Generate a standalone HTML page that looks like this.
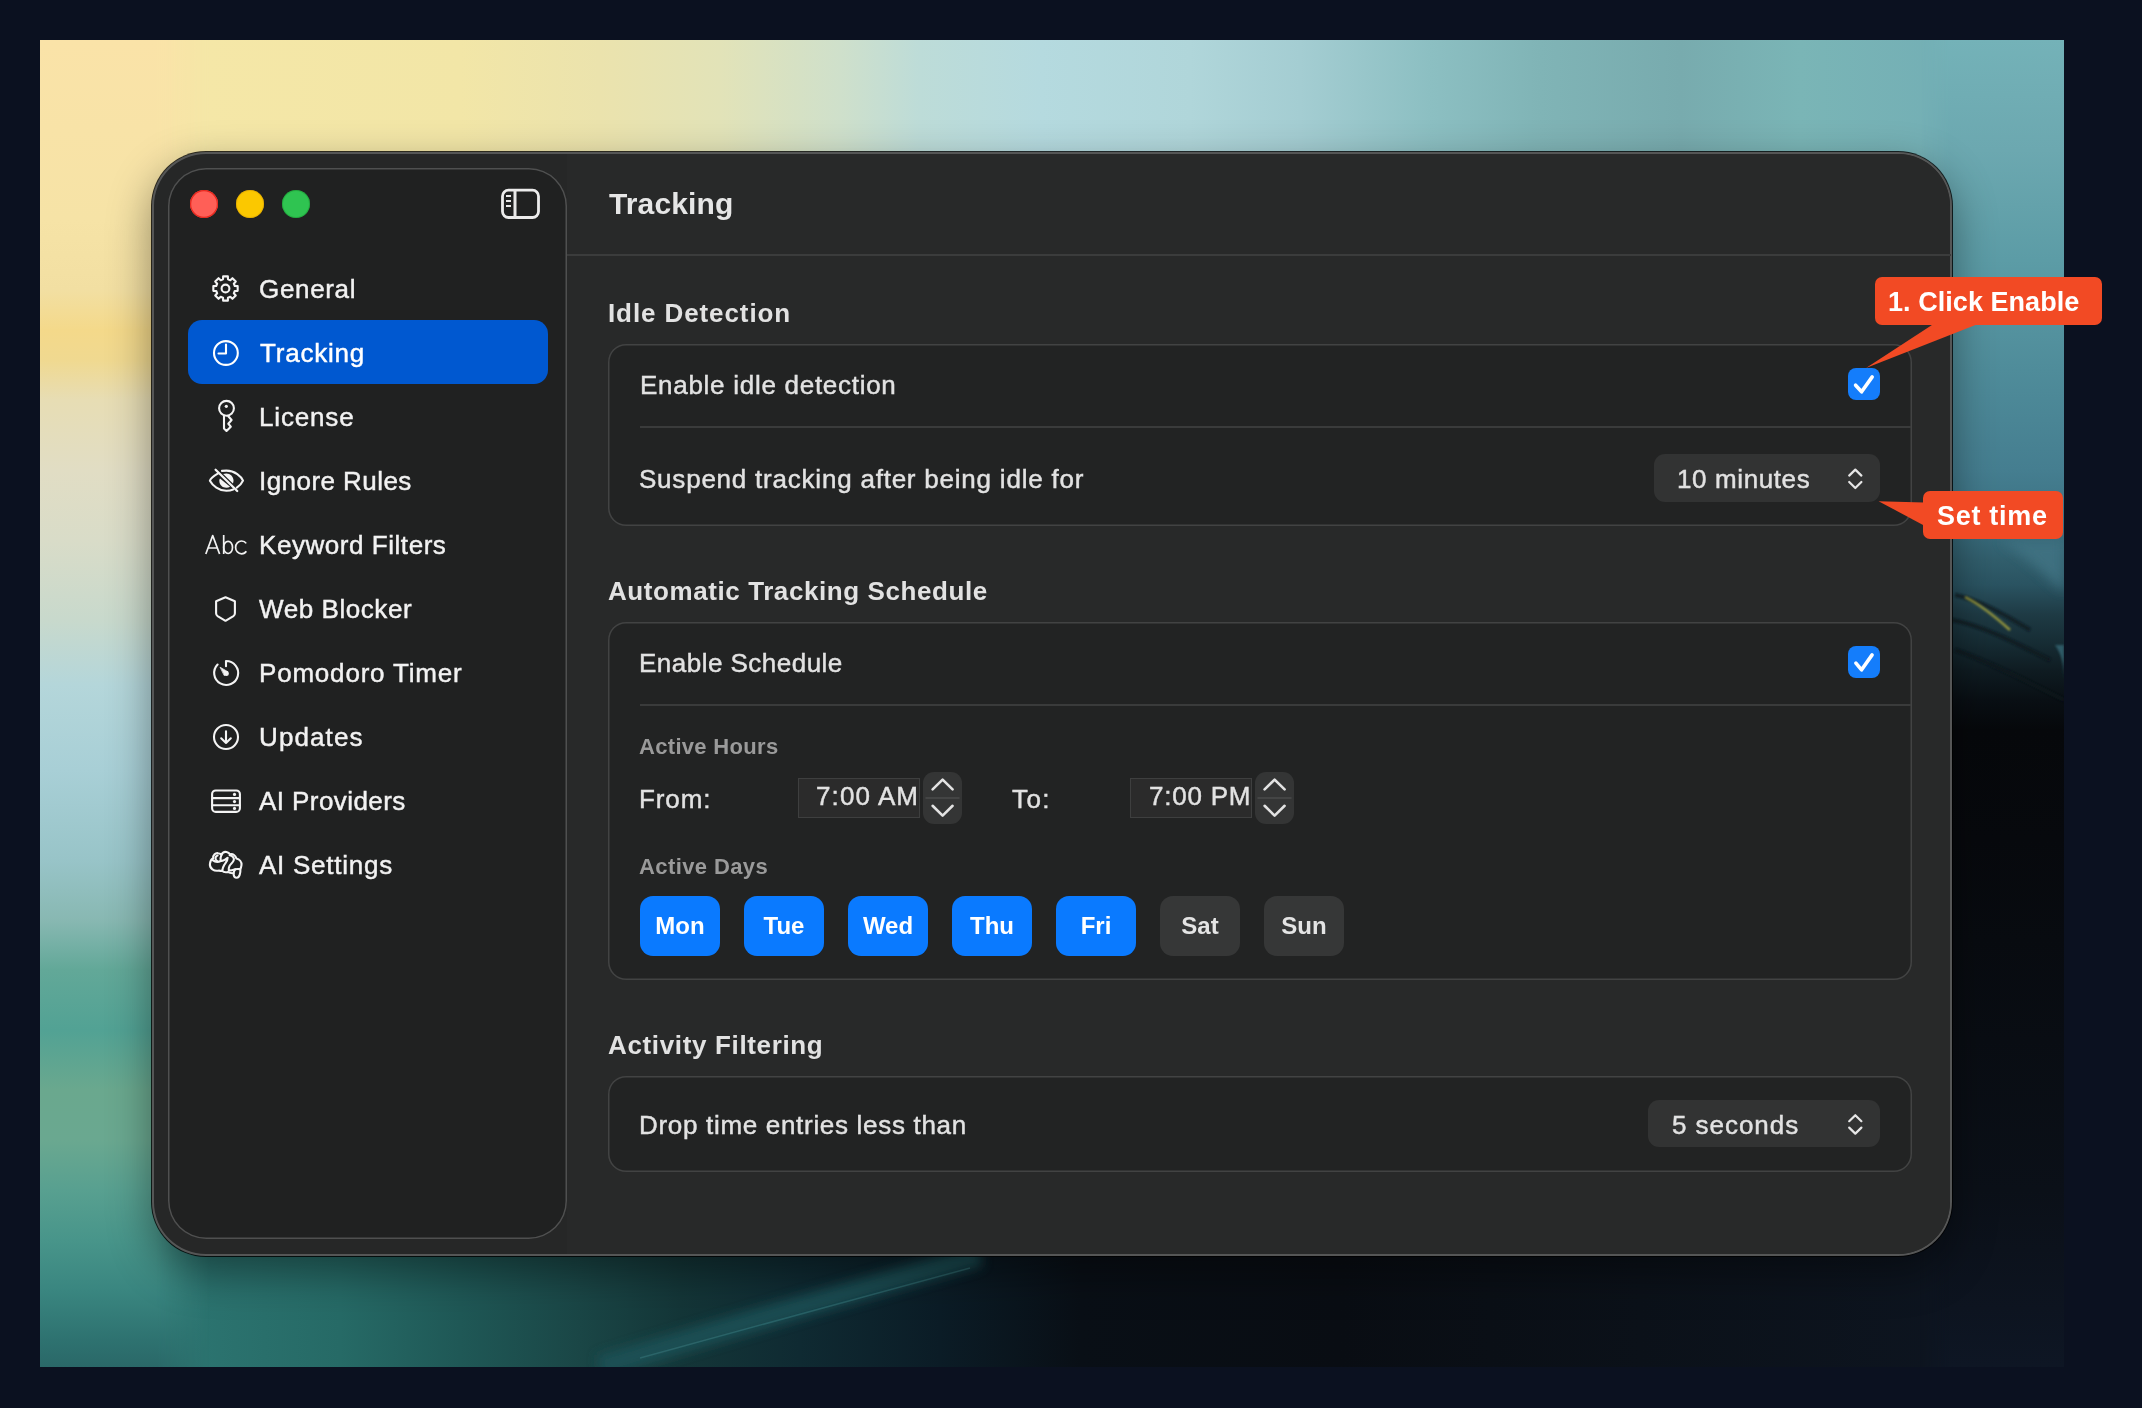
<!DOCTYPE html>
<html>
<head>
<meta charset="utf-8">
<style>
*{margin:0;padding:0;box-sizing:border-box}
html,body{width:2142px;height:1408px;overflow:hidden;background:#0b1120;font-family:"Liberation Sans",sans-serif}
.abs{position:absolute}
#wall{position:absolute;left:40px;top:40px;width:2024px;height:1327px;overflow:hidden;background:#0c141d}
#wall .s{position:absolute}
#wt{left:0;top:0;width:2024px;height:260px;background:linear-gradient(90deg,#fae3a8 0px,#f5e7a7 160px,#f2e6a7 420px,#ebe3ad 560px,#e2e3b8 680px,#cfe0cb 800px,#bddcd8 880px,#b5dadf 1000px,#b0d6da 1150px,#a4cdd2 1260px,#8cbfc2 1390px,#80b4b6 1500px,#78abae 1640px,#7ab5b6 1760px,#6eaab4 2024px)}
#wl{-webkit-mask-image:linear-gradient(90deg,#000 0,#000 116px,transparent 170px);mask-image:linear-gradient(90deg,#000 0,#000 116px,transparent 170px);left:0;top:0;width:170px;height:1327px;background:linear-gradient(180deg,#fae3a8 0px,#f6e3a6 180px,#f2dfa2 250px,#f4d98a 290px,#f0d990 320px,#e7ddb4 360px,#e1ddc4 430px,#d9dcc8 500px,#c8d9cc 580px,#b4d6da 645px,#a8cfd6 730px,#98c4c8 820px,#88b8b2 880px,#62a898 930px,#52a294 990px,#6aa88e 1050px,#6aa890 1100px,#58a090 1150px,#48958a 1200px,#3a8680 1250px,#2e7270 1300px,#2a6868 1327px)}
#wr{-webkit-mask-image:linear-gradient(90deg,transparent 0,#000 30px);mask-image:linear-gradient(90deg,transparent 0,#000 30px);left:1880px;top:0;width:144px;height:1327px;background:linear-gradient(180deg,#74b2b8 0px,#6ca8b0 110px,#5c9ca6 220px,#4f8c9a 330px,#457e90 430px,#3c7283 480px,#315e6c 520px,#2a5361 545px,#1e3a44 575px,#172e36 600px,#0f1c22 630px,#090f14 660px,#06080b 690px,#07090d 800px,#090d13 1000px,#0b1018 1150px,#0e1624 1327px)}
#wb{left:0;top:1180px;width:2024px;height:147px;background:linear-gradient(90deg,#32807a 0px,#2c7470 150px,#266a66 300px,#1f5856 420px,#1a4646 540px,#143638 640px,#0f2a32 760px,#0b1c26 900px,#090f16 1040px,#090d13 1300px,#0b1119 1600px,#0e1622 2024px)}

#win{position:absolute;left:152px;top:152px;width:1800px;height:1104px;border-radius:54px;background:#262727;
 box-shadow:0 0 0 1px rgba(0,0,0,0.8), inset 0 0 0 2px rgba(255,255,255,0.22), 0 16px 44px rgba(0,0,0,0.42);}
#side{position:absolute;left:168px;top:168px;width:399px;height:1071px;border-radius:38px;background:#202121;
 box-shadow: inset 0 0 0 1.5px rgba(255,255,255,0.21);}
.tl{position:absolute;width:28px;height:28px;border-radius:50%;top:190px}
.txt{position:absolute;line-height:1;white-space:nowrap;will-change:transform}
.row,.side-t{-webkit-text-stroke:0.45px currentColor}
.side-t{font-size:26px;color:#f2f2f2}
.hdr{font-size:26px;font-weight:700;color:#e2e2e2}
.row{font-size:26px;color:#e2e2e2}
.card{position:absolute;left:608px;width:1304px;border-radius:18px;background:#222323;box-shadow: inset 0 0 0 1.5px rgba(255,255,255,0.15)}
.sep{position:absolute;left:640px;width:1271px;height:2px;background:#3a3b3b}
.chk{position:absolute;width:32px;height:32px;border-radius:8px;background:#147dfb}
.popup{position:absolute;height:47px;border-radius:11px;background:#323333}
.day{will-change:transform;position:absolute;top:896px;width:80px;height:60px;border-radius:13px;background:#0a7aff;color:#fff;font-size:24px;font-weight:700;text-align:center;line-height:60px}
.day.off{background:#363737;color:#e4e4e4}
.tfield{position:absolute;top:778px;height:40px;width:122px;background:#2b2b2b;box-shadow:inset 0 0 0 1px #3e3f3f}
.stepper{position:absolute;top:772px;width:39px;height:52px;border-radius:11px;background:#343535}
.ann{position:absolute;background:#f24a24;border-radius:7px;color:#fff;font-weight:700;font-size:27px}
</style>
</head>
<body>
<div id="wall"><div class="s" id="wt"></div><div class="s" id="wb"></div><div class="s" id="wl"></div><div class="s" id="wr"></div><svg class="s" style="left:0;top:0" width="2024" height="1327" viewBox="0 0 2024 1327">
 <defs><filter id="bl" x="-50%" y="-50%" width="200%" height="200%"><feGaussianBlur stdDeviation="6"/></filter>
 <filter id="bl2"><feGaussianBlur stdDeviation="1.2"/></filter></defs>
 <path d="M1960 500 C1990 520 2010 540 2024 552 L2024 500 Z" fill="#3f7282" filter="url(#bl)" opacity="0.9"/>
 <path d="M2015 605 C2022 615 2024 625 2024 640 L2024 605 Z" fill="#2e5a66" filter="url(#bl2)"/>
 <path d="M1915 555 C1940 560 1965 575 1990 590 M1912 580 C1940 585 1970 600 2010 620 M1915 610 C1945 620 1985 640 2024 660" stroke="#0a141a" stroke-width="4" fill="none" filter="url(#bl2)" opacity="0.7"/>
 <path d="M1925 557 C1935 562 1950 572 1970 590" stroke="#9a9a3c" stroke-width="2.4" fill="none" filter="url(#bl2)"/>
 <path d="M560 1327 C680 1290 800 1255 940 1215" stroke="#1d5258" stroke-width="22" fill="none" filter="url(#bl)" opacity="0.85"/>
 <path d="M600 1318 C700 1290 820 1258 930 1228" stroke="#3a7c80" stroke-width="1.5" fill="none" opacity="0.5"/>
</svg></div>
<div id="win"></div>
<div class="abs" style="left:567px;top:154px;width:1383px;height:1100px;border-radius:0 52px 52px 0;background:#282929"></div>
<div id="side"></div>

<!-- traffic lights -->
<div class="tl" style="left:190px;background:#ff5f57;box-shadow:inset 0 0 0 1.2px #e8281e"></div>
<div class="tl" style="left:236px;background:#fbc800;box-shadow:inset 0 0 0 1px rgba(220,160,0,0.5)"></div>
<div class="tl" style="left:282px;background:#2fc451;box-shadow:inset 0 0 0 1px rgba(20,140,40,0.4)"></div>

<!-- sidebar toggle -->
<svg class="abs" style="left:498px;top:186px" width="46" height="36" viewBox="0 0 46 36">
 <rect x="4.5" y="4.2" width="36" height="27.3" rx="6" fill="none" stroke="#ececec" stroke-width="2.8"/>
 <line x1="17" y1="4" x2="17" y2="32" stroke="#e8e8e8" stroke-width="3"/>
 <line x1="8" y1="10" x2="13" y2="10" stroke="#e8e8e8" stroke-width="2"/>
 <line x1="8" y1="15" x2="13" y2="15" stroke="#e8e8e8" stroke-width="2"/>
 <line x1="8" y1="20" x2="13" y2="20" stroke="#e8e8e8" stroke-width="2"/>
</svg>

<!-- sidebar selection -->
<div class="abs" style="left:188px;top:320px;width:360px;height:64px;border-radius:14px;background:#0058d0"></div>

<!-- sidebar labels -->
<div class="txt side-t" style="left:259px;top:276px;letter-spacing:0.67px">General</div>
<div class="txt side-t" style="left:260px;top:340px;color:#fff;letter-spacing:0.8px">Tracking</div>
<div class="txt side-t" style="left:259px;top:404px;letter-spacing:0.83px">License</div>
<div class="txt side-t" style="left:259px;top:468px;letter-spacing:0.45px">Ignore Rules</div>
<div class="txt side-t" style="left:259px;top:532px;letter-spacing:0.55px">Keyword Filters</div>
<div class="txt side-t" style="left:259px;top:596px;letter-spacing:0.57px">Web Blocker</div>
<div class="txt side-t" style="left:259px;top:660px;letter-spacing:0.8px">Pomodoro Timer</div>
<div class="txt side-t" style="left:259px;top:724px;letter-spacing:1.1px">Updates</div>
<div class="txt side-t" style="left:259px;top:788px;letter-spacing:0.43px">AI Providers</div>
<div class="txt side-t" style="left:259px;top:852px;letter-spacing:0.74px">AI Settings</div>

<!-- ICONS -->

<svg class="abs" style="left:0;top:0" width="600" height="1000" viewBox="0 0 600 1000" fill="none" stroke="#f4f4f4" stroke-width="2.1" stroke-linecap="round" stroke-linejoin="round">
 <!-- gear -->
 <path id="gear" d="M223.02 279.23 L223.13 276.33 L227.87 276.33 L227.98 279.23 L230.30 280.19 L232.43 278.22 L235.78 281.57 L233.81 283.70 L234.77 286.02 L237.67 286.13 L237.67 290.87 L234.77 290.98 L233.81 293.30 L235.78 295.43 L232.43 298.78 L230.30 296.81 L227.98 297.77 L227.87 300.67 L223.13 300.67 L223.02 297.77 L220.70 296.81 L218.57 298.78 L215.22 295.43 L217.19 293.30 L216.23 290.98 L213.33 290.87 L213.33 286.13 L216.23 286.02 L217.19 283.70 L215.22 281.57 L218.57 278.22 L220.70 280.19 Z"/>
 <circle cx="225.5" cy="288.5" r="3.9"/>
 <!-- clock -->
 <circle cx="225.9" cy="353" r="11.9" stroke="#fff"/>
 <path d="M226 344.5 V353.5 H218.5" stroke="#fff"/>
 <!-- key -->
 <circle cx="226.5" cy="408.3" r="7.4"/>
 <circle cx="226.3" cy="406.3" r="1.6" fill="#f4f4f4" stroke="none"/>
 <path d="M224 415.6 V428.6 L226.5 431 L230.8 426.7 L228.3 423.8 L231.6 420 L228.3 416.3"/>
 <!-- eye slash -->
 <path d="M218.5 473.2 C213.5 476.2 210.2 479.5 209.9 480.7 C212.5 485.5 219 490.8 226.4 490.8 C229.2 490.8 231.6 490.2 233.2 489.5"/>
 <path d="M222 470.9 C223.4 470.7 224.9 470.6 226.4 470.6 C235 470.6 241.3 476.5 243 480.7 C242 483 239.8 485.7 236.8 487.6"/>
 <path d="M215.6 469.8 L237.2 491" stroke-width="2.3"/>
 <path d="M220 478.5 C219.5 479.1 219.3 480 219.3 480.8 C219.3 485 222.5 487.8 226.3 487.8 C227.8 487.8 229 487.4 230.1 486.7 Z" fill="#f4f4f4" stroke="none"/>
 <path d="M223.2 474 C224.2 473.6 225.2 473.4 226.4 473.4 C230.3 473.4 233.5 476.6 233.5 480.6 C233.5 481.7 233.3 482.6 232.9 483.5 Z" fill="#f4f4f4" stroke="none"/>
 <!-- shield -->
 <path d="M225.5 597.3 L216.1 601.2 V613.2 C216.1 614.5 216.7 615.5 217.6 616.1 L225.5 620.8 L233.4 616.1 C234.3 615.5 234.9 614.5 234.9 613.2 V601.2 Z"/>
 <!-- timer -->
 <path d="M217.6 664.6 A12 12 0 1 0 226 661 V666.2"/>
 <path d="M220.4 667.4 L228.1 671.9 L224.5 675.3 Z" fill="#f4f4f4" stroke="#f4f4f4" stroke-width="0.8"/><circle cx="226.3" cy="673.6" r="2.5" fill="#f4f4f4" stroke="none"/>
 <!-- updates -->
 <circle cx="226" cy="737" r="12"/>
 <path d="M226 731.2 V743 M221.2 738.3 L226 743 L230.8 738.3"/>
 <!-- server -->
 <rect x="212.1" y="790.5" width="27.8" height="21.4" rx="3.6"/>
 <path d="M212.5 798.1 H239.5 M212.5 805.2 H239.5"/>
 <circle cx="234.5" cy="794.4" r="1.6" fill="#f4f4f4" stroke="none"/>
 <circle cx="234.5" cy="801.6" r="1.6" fill="#f4f4f4" stroke="none"/>
 <circle cx="234.5" cy="808.4" r="1.6" fill="#f4f4f4" stroke="none"/>
 <!-- brain -->
 <g transform="translate(204 843)" stroke-width="2.1">
 <path d="M15 27.5 C10 28.5 5.5 25.5 5.9 21 C6.2 17.8 8 15.8 9.2 15.2 C9 12 11.5 9.8 14 10.2 C15.8 10.4 17 11 17.5 11.8 C18.5 9.5 20.5 8.6 22.5 9 C24.5 9.4 25.6 10.6 26 11.3 C29 10.5 31.6 12.5 32.4 15.6 C35.5 16.4 37.8 19 37.5 22 C37.3 23.8 36.6 25.4 36.4 26.4 C36.6 30 35.5 34.8 32.8 34.8 C30.5 34.8 29.6 32.5 29.6 30.2 C27.5 30.4 25.2 29.8 24 29 C21.5 29.4 19 28.8 18.2 27.8 C17.3 28 16 27.9 15 27.5 Z"/>
 <path d="M8.6 17.2 C10.5 18.6 14 19.4 16.8 18"/>
 <path d="M13.6 12.6 C11 13.4 10.8 16.6 13 17.8"/>
 <path d="M16.8 18 C16.4 16.2 16.6 13.6 17.5 11.8"/>
 <path d="M16.8 18 C19 18.2 21.4 16.8 23.6 14.8 C23.8 17.6 21.8 19.6 20.4 21.6 C19.2 23.4 18.6 25.8 18.2 27.8"/>
 <path d="M25.6 12.2 C28.5 12.8 30.4 14.6 29.8 17 C29.2 19.4 26.6 21 25.4 23.2 C24.6 24.8 24.6 26.6 24.8 27.6 C27 27.6 29.4 27 31.2 26.3 C32.8 25.8 34.2 25.9 35.6 26.1"/>
 <path d="M31.2 26.3 C30.2 27.5 29.8 28.8 29.6 30.2"/>
 </g>
</svg>
<svg class="abs" style="left:0;top:0" width="300" height="600" viewBox="0 0 300 600" fill="none" stroke="#f2f2f2" stroke-width="1.7" stroke-linejoin="round">
 <path d="M205.8 554 L212.7 535.6 L219.6 554 M208 548 H217.4"/>
 <path d="M223.7 535 V554"/>
 <ellipse cx="228.1" cy="547.4" rx="4.4" ry="6.1"/>
 <path d="M246.2 543.4 C245.2 541.8 243.6 541 241.6 541 C238.2 541 235.6 543.8 235.6 547.4 C235.6 551 238.2 553.8 241.6 553.8 C243.6 553.8 245.3 553 246.3 551.3"/>
</svg>


<!-- header -->
<div class="txt" style="left:609px;top:189px;font-size:30px;font-weight:700;color:#e6e6e6;letter-spacing:0.14px">Tracking</div>
<div class="abs" style="left:567px;top:254px;width:1384px;height:2px;background:#3b3c3c"></div>

<!-- Idle detection -->
<div class="txt hdr" style="left:608px;top:300px;letter-spacing:0.9px">Idle Detection</div>
<div class="card" style="top:344px;height:182px"></div>
<div class="txt row" style="left:639.5px;top:372px;letter-spacing:0.72px">Enable idle detection</div>
<div class="sep" style="top:426px"></div>
<div class="txt row" style="left:638.6px;top:466px;letter-spacing:0.78px">Suspend tracking after being idle for</div>
<div class="chk" style="left:1848px;top:368px"></div>
<div class="popup" style="left:1654px;top:454px;width:226px;height:48px"></div>
<div class="txt row" style="left:1676.5px;top:466px;letter-spacing:0.61px">10 minutes</div>

<!-- schedule -->
<div class="txt hdr" style="left:608px;top:578px;letter-spacing:0.58px">Automatic Tracking Schedule</div>
<div class="card" style="top:622px;height:358px"></div>
<div class="txt row" style="left:639.3px;top:650px;letter-spacing:0.48px">Enable Schedule</div>
<div class="chk" style="left:1848px;top:646px"></div>
<div class="sep" style="top:704px"></div>
<div class="txt" style="left:638.6px;top:736px;font-size:22px;font-weight:700;color:#9a9a9a;letter-spacing:0.31px">Active Hours</div>
<div class="txt row" style="left:639px;top:786px;letter-spacing:0.9px">From:</div>
<div class="tfield" style="left:798px"></div>
<div class="txt row" style="left:816px;top:783px;letter-spacing:1.1px">7:00 AM</div>
<div class="stepper" style="left:923px"></div>
<div class="txt row" style="left:1012px;top:786px;letter-spacing:1.4px">To:</div>
<div class="tfield" style="left:1130px"></div>
<div class="txt row" style="left:1148.6px;top:783px;letter-spacing:0.78px">7:00 PM</div>
<div class="stepper" style="left:1255px"></div>
<div class="txt" style="left:638.7px;top:856px;font-size:22px;font-weight:700;color:#9a9a9a;letter-spacing:0.4px">Active Days</div>
<div class="day" style="left:640px">Mon</div>
<div class="day" style="left:744px">Tue</div>
<div class="day" style="left:848px">Wed</div>
<div class="day" style="left:952px">Thu</div>
<div class="day" style="left:1056px">Fri</div>
<div class="day off" style="left:1160px">Sat</div>
<div class="day off" style="left:1264px">Sun</div>

<!-- activity filtering -->
<div class="txt hdr" style="left:607.7px;top:1032px;letter-spacing:0.65px">Activity Filtering</div>
<div class="card" style="top:1076px;height:96px"></div>
<div class="txt row" style="left:639.4px;top:1112px;letter-spacing:0.69px">Drop time entries less than</div>
<div class="popup" style="left:1648px;top:1100px;width:232px"></div>
<div class="txt row" style="left:1671.5px;top:1112px;letter-spacing:0.96px">5 seconds</div>


<!-- controls svg -->
<svg class="abs" style="left:0;top:0" width="2142" height="1408" viewBox="0 0 2142 1408" fill="none" stroke-linecap="round" stroke-linejoin="round">
 <path d="M1855.6 385.2 L1861.6 391.8 L1872.2 376.9" stroke="#fff" stroke-width="3.6"/>
 <path d="M1855.9 663.1 L1861.6 669.8 L1872.1 654.9" stroke="#fff" stroke-width="3.6"/>
 <path d="M1849.2 475.6 L1855.3 469.6 L1861.4 475.6 M1849.2 482 L1855.3 488 L1861.4 482" stroke="#e6e6e6" stroke-width="2.2"/>
 <path d="M1849.2 1121.2 L1855.3 1115.2 L1861.4 1121.2 M1849.2 1127.6 L1855.3 1133.6 L1861.4 1127.6" stroke="#e6e6e6" stroke-width="2.2"/>
 <path d="M932.6 789.4 L942.6 779.6 L952.6 789.4 M932.6 805.8 L942.6 815.6 L952.6 805.8" stroke="#e2e2e2" stroke-width="2.6"/>
 <path d="M1264.6 789.4 L1274.6 779.6 L1284.6 789.4 M1264.6 805.8 L1274.6 815.6 L1284.6 805.8" stroke="#e2e2e2" stroke-width="2.6"/>
 <path d="M926 798 H959 M1258 798 H1291" stroke="#4a4b4b" stroke-width="1.5"/>
 <!-- annotation arrows -->
 <polygon points="1933.5,324 1978,324 1866,368" fill="#f24a24"/>
 <polygon points="1924,502.6 1924,525.5 1878.6,501.2" fill="#f24a24"/>
</svg>

<!-- annotations -->
<div class="ann" style="left:1875px;top:277px;width:227px;height:48px"></div>
<div class="txt ann" style="left:1888px;top:289px;background:none;letter-spacing:0.05px">1. Click Enable</div>
<div class="ann" style="left:1923px;top:491px;width:140px;height:48px"></div>
<div class="txt ann" style="left:1937px;top:503px;background:none;letter-spacing:0.7px">Set time</div>
</body>
</html>
